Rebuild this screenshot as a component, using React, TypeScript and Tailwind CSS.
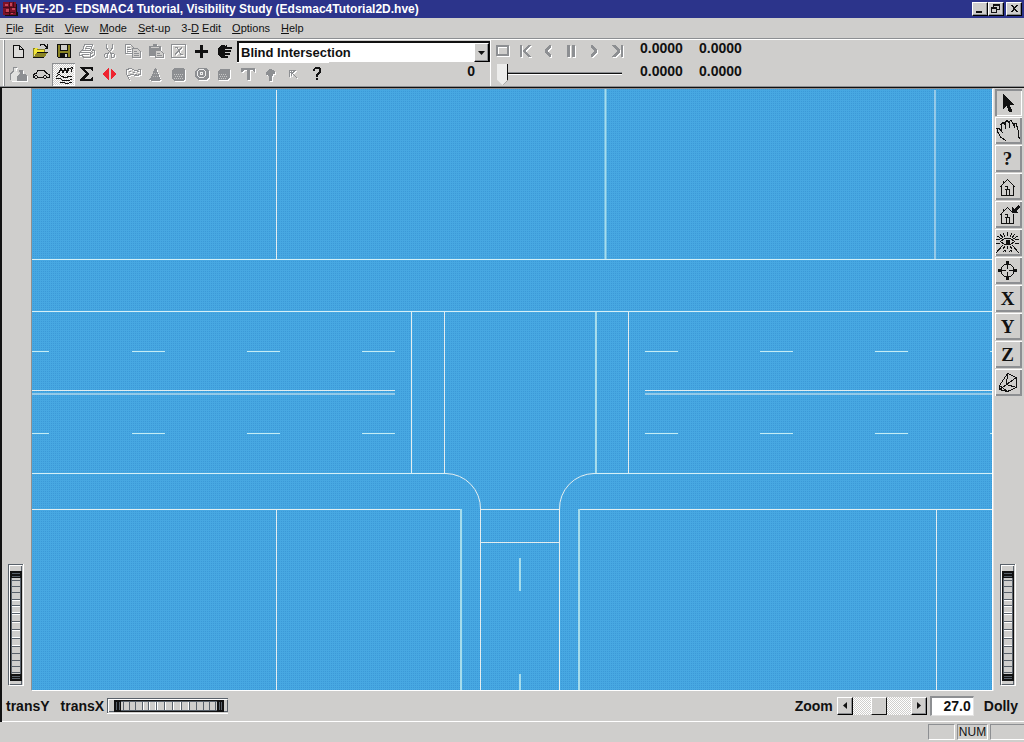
import { useState } from "react";
import type { ReactNode } from "react";
import clsx from "clsx";

const RAISED = "border border-t-white border-l-white border-r-black border-b-black bg-[#cfcecc] shadow-[inset_-1px_-1px_0_#8d8f92]";
const DITHER = "bg-[conic-gradient(#fff_25%,#cfcecc_0_50%,#fff_0_75%,#cfcecc_0)] bg-[length:2px_2px]";

const MENUS = [
  { before: "", key: "F", after: "ile" },
  { before: "", key: "E", after: "dit" },
  { before: "", key: "V", after: "iew" },
  { before: "", key: "M", after: "ode" },
  { before: "", key: "S", after: "et-up" },
  { before: "3-", key: "D", after: " Edit" },
  { before: "", key: "O", after: "ptions" },
  { before: "", key: "H", after: "elp" },
];

interface Tool {
  name: string;
  icon: ReactNode;
  disabled?: boolean;
  pressed?: boolean;
}

const FILE_TOOLS: Tool[] = [
  { name: "New", icon: <path d="M7.5 5.5h6l4 4v8h-10zM13.5 5.5v4h4" fill="#dcdbd9" /> },
  {
    name: "Open",
    icon: (
      <>
        <path d="M4 8h4l1 1h6v3h-7l-4 5z" fill="#f3e63a" stroke="none" />
        <path d="M4.5 17V8.500h1M8 9.500h7v2" stroke="#8a8424" />
        <path d="M8 12h11l-4 6H4z" fill="#8a8424" stroke="none" />
        <path d="M4 17.500h11M11 5.500l1-1h3l3 3M18.500 4v4.500h-3M8 12.500h11" />
      </>
    ),
  },
  {
    name: "Save",
    icon: (
      <>
        <path d="M5.500 4.500h13v13h-12l-1-1z" fill="#8a8424" />
        <path d="M8.500 4.500h7v6h-7z" fill="#cfcecc" />
        <path d="M8 13h8v5H8z" fill="#111" stroke="none" />
        <path d="M13 14h2v3h-2z" fill="#cfcecc" stroke="none" />
      </>
    ),
  },
  {
    name: "Print",
    disabled: true,
    icon: (
      <>
        <path d="M9.500 4.500h8l-2 6h-8zM11 6.500h5M10 8.500h5" />
        <path d="M7.500 9.500l-3 3v3h3l1 2h7l4-3v-4l-2-1M4.500 12.500h11l3-3M15.500 12.500v5M7 14.500h7M18 12l-2 2" />
      </>
    ),
  },
  {
    name: "Cut",
    disabled: true,
    icon: (
      <>
        <path d="M8.500 4v4l5 6M14.500 4v4l-5 6" />
        <path d="M7.500 13.500h2v4h-2l-1-1v-2zM13.500 13.500h2l1 1v2l-1 1h-2z" />
      </>
    ),
  },
  {
    name: "Copy",
    disabled: true,
    icon: (
      <>
        <path d="M4.500 4.500h5l3 3v6h-8zM6 7.500h3M6 9.500h4M6 11.500h4" />
        <path d="M11.500 8.500h5l3 3v6h-8z" fill="#cfcecc" />
        <path d="M13 11.500h3M13 13.500h5M13 15.500h5" />
      </>
    ),
  },
  {
    name: "Paste",
    disabled: true,
    icon: (
      <>
        <path d="M5 6h4V4h4v2h4v10H5z" fill="currentColor" stroke="none" />
        <path d="M7 7.500h8" stroke="#cfcecc" />
        <path d="M11.500 10.500h5l3 3v4h-8z" fill="#cfcecc" />
        <path d="M13 13.500h3M13 15.500h5" />
      </>
    ),
  },
  {
    name: "Delete",
    disabled: true,
    icon: <path d="M4.500 4.500h14v13h-14zM8 7.500h2l4 7h2M15 7.500l-7 7" />,
  },
  { name: "Add", icon: <path d="M10 5h3v5h5v3h-5v5h-3v-5H5v-3h5z" fill="#111" stroke="none" /> },
  {
    name: "Edit object",
    icon: (
      <path
        d="M8 5h4v1l1-1h1v2h5v2h-7v1h6v2h-6v1h5v2h-5v1h3v1l-1 1H9l-3-2-1-3V9z"
        fill="#111"
        stroke="none"
      />
    ),
  },
];

const MODE_TOOLS: Tool[] = [
  {
    name: "Humans",
    disabled: true,
    icon: (
      <>
        <path d="M7 4h3v4l3 3v7H5v-7l2-2z" fill="#e2e2e0" stroke="none" />
        <path d="M7.500 8V4.500h3M4.500 17v-6l3-3" />
        <path d="M13 7h4v4h2l2 2v5H11v-5l2-2h1z" fill="currentColor" stroke="none" />
      </>
    ),
  },
  {
    name: "Vehicles",
    icon: (
      <path d="M5 14.500h-1v-3l3-1 2-3h6l3 3 2 1v3h-2M9 14.500h5M5.500 13.500l1-1h1l1 1v1l-1 1h-1l-1-1zM14.500 13.500l1-1h1l1 1v1l-1 1h-1l-1-1z" />
    ),
  },
  {
    name: "Environment",
    pressed: true,
    icon: (
      <path d="M5 10.500l2-1 2-4 2 4 2-4 2 4 2-3M15 8.500l1-3h2l2-1M20.500 4l-1 5M4 13.500l3-2 3 2 3 1 5-1 2 0M4 15.500l4 0 3 2 5 0 4-1M8 19.500l4 0 2 1 6-1" />
    ),
  },
  {
    name: "Event",
    icon: <path d="M5 4h13v4h-1l-1-2H9l5 5-5 5h7l1-2h1v4H5v-2l6-5-6-6z" fill="#111" stroke="none" />,
  },
  {
    name: "Playback",
    icon: <path d="M10.500 5v12l-6-6zM12.500 5v12l6-6z" fill="#ee2430" stroke="none" />,
  },
  {
    name: "Flag",
    disabled: true,
    icon: <path d="M5.500 6v5l3 6M5.500 6.500l4-1 5 2 5-1v5l-4 1-5-1-3 1M8 8.500h2M12 9.500h2M16 8.500h2M9 11.500h2M14 11.500h2" />,
  },
  {
    name: "Cone",
    disabled: true,
    icon: (
      <>
        <path d="M11 5h1l4 10 1 2-2 1H8l-3-1 2-3z" fill="currentColor" stroke="none" />
        <path d="M10 10.500h4M9 13.500h6" stroke="#bbb" strokeDasharray="1 1" />
      </>
    ),
  },
  {
    name: "Barrel",
    disabled: true,
    icon: (
      <>
        <path d="M7 5h9l2 2v9l-2 2H7l-2-2V7z" fill="currentColor" stroke="none" />
        <path d="M7 11.500h9M8 13.500h8M7 15.500h9" stroke="#c6c6c5" strokeDasharray="1 1" />
      </>
    ),
  },
  {
    name: "Tire",
    disabled: true,
    icon: (
      <>
        <path d="M8 5h8l3 3v6l-3 3H8l-3-3V8z" fill="currentColor" stroke="none" />
        <path d="M9.500 6.500h4l2 2v4l-2 2h-4l-2-2v-4zM10.500 9.500h2v2h-2z" stroke="#eee" />
      </>
    ),
  },
  {
    name: "Box",
    disabled: true,
    icon: (
      <>
        <path d="M7 6h10v8l-3 3H5V8z" fill="currentColor" stroke="none" />
        <path d="M6 11.500h8M7 13.500h7M6 15.500h8" stroke="#c6c6c5" strokeDasharray="1 1" />
      </>
    ),
  },
  { name: "Text", disabled: true, icon: <path d="M5 5h14v4h-1l-1-2h-3v10h-3V7H8L6 9H5z" fill="currentColor" stroke="none" /> },
  {
    name: "Lamp",
    disabled: true,
    icon: <path d="M10 6h3v1h2l1 2v2h-2v2h-1v5h-3v-5H9v-1H7V9l2-2h1z" fill="currentColor" stroke="none" />,
  },
  {
    name: "Select",
    disabled: true,
    icon: <path d="M7.500 14V7.500h6M8 9.500h4M9.500 8v4M9 9l6 6M11.500 8l1 1M9 12l1 1" />,
  },
  {
    name: "Help",
    icon: <path d="M8 8V6l2-2h4l2 2v3l-3 3v2h-2v-3l3-3V6h-4v2zM11 15h2v2h-2z" fill="#111" stroke="none" />,
  },
];

const VIEW_TOOLS: Tool[] = [
  {
    name: "Pick",
    pressed: true,
    icon: <path d="M8 3v16l3-3 1 1 2 5h3v-2l-2-4v-1h4z" fill="#111" stroke="none" />,
  },
  {
    name: "Pan",
    icon: (
      <path d="M11 22.500l-5-3-3-5-1-4 2 0 3 3-1-7 2-2 2 2 1 4-1-6 2-2 2 2 1 5-1-6 2-1 2 3 2 4-1-4 2 0 2 6 1 8 2 3" />
    ),
  },
  { name: "View help", icon: "?" },
  {
    name: "Home",
    icon: <path d="M4.500 13.500l8-8 8 8M6.500 12v9.500h12V12M8.500 9V6.500M9.500 12.500h3v3h-3M14.500 21v-5.500h-3v6" />,
  },
  {
    name: "Set home",
    icon: (
      <>
        <path d="M4.500 13.500l8-8 6 6M6.500 12v9.500h12V12M8.500 9V6.500M9.500 12.500h3v3h-3M14.500 21v-5.500h-3v6" />
        <path d="M17 5l2 2 4-4 2 2-4 4 2 2h-6z" fill="#111" stroke="none" />
      </>
    ),
  },
  {
    name: "View all",
    icon: (
      <>
        <path d="M5.500 11.500l4-3h6l4 3-4 3h-6z" />
        <path d="M11 10h3v3h-3z" fill="#111" />
        <path d="M12.500 2v4M8.500 3l1 4M16.500 3l-1 4M5 4l3 4M20 4l-3 4M2 6l5 3M23 6l-5 3M1 9.500h4M20 9.500h4M1 13h4M20 13h4M8 15l-7 8M17 15l7 8M10 16l-2 3M15 16l2 3M12.500 16v3M8 22l2-2 1 2M14 22l2-2 1 2" />
      </>
    ),
  },
  {
    name: "Seek",
    icon: (
      <>
        <circle cx="12.500" cy="12.500" r="6.500" />
        <path d="M11 3h3v4h-3zM11 18h3v4h-3zM3 11h4v3H3zM18 11h4v3h-4z" fill="#111" stroke="none" />
        <path d="M12.500 7v4M12.500 14v4M7 12.500h4M14 12.500h4" />
      </>
    ),
  },
  { name: "View along X", icon: "X" },
  { name: "View along Y", icon: "Y" },
  { name: "View along Z", icon: "Z" },
  {
    name: "Perspective",
    icon: <path d="M12.500 3.500l9 4v10l-9 4-8-2v-4zM12.500 3.500l-1 11-7 5M11.500 14.500l10-7M11.500 14.500l10 3M4.500 15.500l8 6" />,
  },
];

const PLAYBACK = [
  { name: "Reset", icon: <path d="M5 5h13v11H5zM7 7v7h9V7z" fillRule="evenodd" /> },
  { name: "Rewind", icon: <path d="M6 5h2v12H6zM14 5h3l-5 6 5 6h-3l-5-5v-2z" /> },
  { name: "Step back", icon: <path d="M12 5h2v2l-3 4 3 4v2h-2l-4-5v-2z" /> },
  { name: "Pause", icon: <path d="M7 5h3v12H7zM12 5h3v12h-3z" /> },
  { name: "Play", icon: <path d="M8 5h2l4 5v2l-4 5H8v-2l3-4-3-4z" /> },
  { name: "Fast forward", icon: <path d="M6 5h3l5 5v2l-5 5H6l5-6zM15 5h2v12h-2z" /> },
];

const DASH_X = [-16, 100, 215, 330, 613, 728, 843, 958];

function ToolButton({ tool }: { tool: Tool }) {
  return (
    <button
      type="button"
      aria-label={tool.name}
      disabled={tool.disabled}
      className={clsx(
        "h-[23px] w-[23px] shrink-0",
        tool.disabled ? "text-[#8d8f92]" : "text-[#111]",
        tool.pressed && [DITHER, "shadow-[inset_1px_1px_0_#8d8f92,inset_-1px_-1px_0_#fff]"],
      )}
    >
      <svg
        viewBox="0 0 23 23"
        className={clsx("h-[23px] w-[23px]", tool.disabled && "drop-shadow-[1px_1px_0_#fff]")}
        fill="none"
        stroke="currentColor"
        shapeRendering="crispEdges"
        aria-hidden="true"
      >
        {tool.icon}
      </svg>
    </button>
  );
}

function ViewButton({ tool }: { tool: Tool }) {
  return (
    <button
      type="button"
      aria-label={tool.name}
      className={clsx(
        "flex h-[27px] w-[27px] items-center justify-center overflow-hidden pr-[2px]",
        tool.pressed
          ? "shadow-[inset_2px_2px_0_#8d8f92,inset_-1px_-1px_0_#fff]"
          : "shadow-[inset_1px_1px_0_#fff,inset_-2px_-2px_0_#8d8f92]",
      )}
    >
      {typeof tool.icon === "string" ? (
        <span className="font-['Liberation_Serif',serif] text-[19px] leading-5 font-bold">{tool.icon}</span>
      ) : (
        <svg
          viewBox="0 0 25 25"
          className="h-[25px] w-[25px] shrink-0"
          fill="none"
          stroke="#111"
          shapeRendering="crispEdges"
          aria-hidden="true"
        >
          {tool.icon}
        </svg>
      )}
    </button>
  );
}

const TICKS = [16, 22, 28, 35, 41, 49, 57, 65, 74, 82, 89, 96, 102, 108];

function Thumbwheel({ label, horizontal = false }: { label: string; horizontal?: boolean }) {
  return (
    <div className={clsx("relative shrink-0", horizontal ? "h-4 w-[121px]" : "h-[122px] w-4")}>
      <svg
        viewBox={horizontal ? "0 0 121 16" : "0 0 16 122"}
        className="h-full w-full"
        shapeRendering="crispEdges"
        fill="none"
        aria-hidden="true"
      >
        <g transform={horizontal ? "matrix(0 1 1 0 0 0)" : undefined}>
          <path d="M.5 121V.5H15" stroke="#59616a" />
          <path d="M1.500 120V1.500h12M1 121.500h14.500V0" stroke="#fff" />
          <path d="M13.500 2v118.500H2" stroke="#59616a" />
          <path d="M2 7h12v110H2z" fill="#111" />
          <path d="M3 14h10v96H3z" fill="#59616a" />
          <path d="M4 14h8v96H4z" fill="#cfcecc" />
          {TICKS.map((y) => (
            <path key={y} d={`M4 ${y + 0.5}h8`} stroke="#59616a" />
          ))}
          <path d="M4 36.500h8M4 42.500h8M4 48.500h8M4 50.500h8M4 58.500h8M4 66.500h8M4 73.500h8M4 81.500h8" stroke="#fff" />
          <path d="M4 9.500h8M4 12.500h8M4 112.500h8M4 114.500h8" stroke="#59616a" />
        </g>
      </svg>
      <input type="range" aria-label={label} className="absolute inset-0 h-full w-full opacity-0" />
    </div>
  );
}

function RoadView() {
  return (
    <svg
      viewBox="0 0 960 601"
      preserveAspectRatio="xMidYMid slice"
      className="h-full w-full"
      fill="none"
      stroke="#e4eef0"
      role="img"
      aria-label="Plan view of the intersection"
    >
      {/* lot lines */}
      <path d="M244.500 1v169M903 1v169M244.500 420v181M904.500 420v181" />
      <path d="M573.500 0v170" stroke="#a5dcec" strokeWidth="2" />
      {/* kerbs and sidewalks */}
      <path d="M0 170.500h960M0 222.500h960M0 384.500h414M562 384.500h398" stroke="#d5eff6" />
      <path d="M0 420.500h429M448 420.500h80M547 420.500h413" />
      <path d="M414 384.500a35 35 0 0 1 34.500 36V601M562 384.500a35 35 0 0 0-34.500 36V601" />
      <path d="M429 420v181M547 420v181" stroke="#a5dcec" strokeWidth="2" />
      {/* crosswalks and stop line */}
      <path d="M379.500 223v161M412.500 223v161M596.500 223v161M448 453.500h80" />
      <path d="M564 223v161" stroke="#a5dcec" strokeWidth="2" />
      {/* centre line */}
      <path d="M0 301.500h363M0 305h363M613 301.500h347M613 305h347" stroke="#e4eef0" />
      {DASH_X.map((x) => (
        <path key={x} d={`M${x} 262.500h33M${x} 344.500h33`} stroke="#c4ecf4" />
      ))}
      <path d="M488 469v33M488 585v16" stroke="#a5dcec" strokeWidth="2" />
    </svg>
  );
}

export default function App() {
  const [frame, setFrame] = useState(0);
  const [zoom, setZoom] = useState(43);

  return (
    <div className="flex min-h-screen flex-col bg-[#cfcecc] font-['Liberation_Sans',Arial,sans-serif] text-[#111]">
      <header className="flex h-[18px] items-center bg-[#2c348b] pr-[2px] pl-[2px] text-white">
        <svg viewBox="0 0 16 16" className="mr-[2px] h-4 w-4" shapeRendering="crispEdges" aria-hidden="true">
          <path d="M1 1h13v13H1z" fill="#7d1227" />
          <path d="M14 3h1v8h1v4H3v-1h11z" fill="#111" />
          <path d="M3 3h3v2H3zM8 2h2v3H8zM4 8h3v3H4zM10 7h3v2h-3zM9 11h2v2H9z" fill="#c54658" />
          <path d="M1 6h13M7 1v13M11 1v5M3 11h10" stroke="#470a18" />
        </svg>
        <h1 className="flex-1 truncate text-xs leading-4 font-bold">
          HVE-2D - EDSMAC4 Tutorial, Visibility Study (Edsmac4Tutorial2D.hve)
        </h1>
        <button type="button" aria-label="Minimize" className={clsx("h-[14px] w-4", RAISED)}>
          <svg viewBox="0 0 14 12" shapeRendering="crispEdges" aria-hidden="true">
            <path d="M3 8h6v2H3z" fill="#111" />
          </svg>
        </button>
        <button type="button" aria-label="Restore" className={clsx("mr-[2px] h-[14px] w-4", RAISED)}>
          <svg viewBox="0 0 14 12" fill="none" stroke="#111" shapeRendering="crispEdges" aria-hidden="true">
            <path d="M5 2h6M5 1h6M4.500 4V1M10.500 1v5.500H8M2 5h6M2 4h6M2.500 4v5.500h5V4" />
          </svg>
        </button>
        <button type="button" aria-label="Close" className={clsx("h-[14px] w-4", RAISED)}>
          <svg viewBox="0 0 14 12" fill="#111" shapeRendering="crispEdges" aria-hidden="true">
            <path d="M3 2h2l2 2 2-2h2L8 5v1l3 3H9L7 7 5 9H3l3-3V5z" />
          </svg>
        </button>
      </header>

      <nav className="flex h-[21px] items-center gap-[11px] border-b border-[#8d8f92] pl-[6px] text-[11px] leading-4">
        {MENUS.map((m) => (
          <button key={m.key} type="button" className="whitespace-pre">
            {m.before}
            <span className="underline">{m.key}</span>
            {m.after}
          </button>
        ))}
      </nav>

      <section className="flex h-12 border-t border-b border-t-white border-b-[#8d8f92] pl-[3px]">
        <div className="mr-px w-[2px] shrink-0 border-r border-l border-l-white border-r-[#8d8f92]" />
        <div className="w-[484px] shrink-0">
          <div className="flex h-[23px]">
            {FILE_TOOLS.map((t) => (
              <ToolButton key={t.name} tool={t} />
            ))}
            <div className="ml-px min-w-0 flex-1">
              <div className="mt-px flex h-[21px] border-t-2 border-r border-l-2 border-[#111] bg-white">
                <select aria-label="Event" className="flex-1 appearance-none pl-[2px] text-[13px] leading-4 font-bold outline-none">
                  <option>Blind Intersection</option>
                </select>
                <span className={clsx("flex w-[15px] items-center justify-center", RAISED)}>
                  <svg viewBox="0 0 7 4" className="h-1 w-[7px]" aria-hidden="true">
                    <path d="M0 0h7L3.500 4z" fill="#111" />
                  </svg>
                </span>
              </div>
              <div className="h-px w-[92px] bg-white" />
            </div>
          </div>
          <div className="flex h-[23px] items-start justify-between">
            <div className="flex">
              {MODE_TOOLS.map((t) => (
                <ToolButton key={t.name} tool={t} />
              ))}
            </div>
            <output className="pr-[15px] text-sm leading-4 font-bold">{frame}</output>
          </div>
        </div>
        <div className="w-[142px] shrink-0 border-l border-white">
          <div className="flex h-[23px]">
            {PLAYBACK.map((p) => (
              <button key={p.name} type="button" disabled aria-label={p.name} className="h-[23px] w-[23px] text-[#8d8f92]">
                <svg
                  viewBox="0 0 23 23"
                  className="h-[23px] w-[23px] drop-shadow-[1px_1px_0_#fff]"
                  fill="currentColor"
                  shapeRendering="crispEdges"
                  aria-hidden="true"
                >
                  {p.icon}
                </svg>
              </button>
            ))}
          </div>
          <input
            type="range"
            aria-label="Frame"
            min={0}
            max={100}
            value={frame}
            onChange={(e) => setFrame(Number(e.target.value))}
            className="ml-[6px] block h-[23px] w-[125px] appearance-none bg-[linear-gradient(#8d8f92_0_1px,#111_1px_2px,#fff_2px)] bg-[length:100%_3px] bg-[position:0_9px] bg-no-repeat [&::-webkit-slider-thumb]:h-[21px] [&::-webkit-slider-thumb]:w-[11px] [&::-webkit-slider-thumb]:appearance-none [&::-webkit-slider-thumb]:border-r [&::-webkit-slider-thumb]:border-[#111] [&::-webkit-slider-thumb]:bg-[linear-gradient(135deg,#ededec_84%,#111_84%)] [&::-webkit-slider-thumb]:[clip-path:polygon(0_0,100%_0,100%_75%,50%_100%,0_75%)]"
          />
        </div>
        <div className="grid grid-cols-[59px_59px] grid-rows-[23px_23px] pl-2 text-sm leading-4 font-bold">
          <output>0.0000</output>
          <output>0.0000</output>
          <output>0.0000</output>
          <output>0.0000</output>
        </div>
      </section>

      <main className="flex flex-1 flex-col border-t border-l-2 border-[#111]">
        <div className="flex flex-1">
          <aside className="flex w-[29px] shrink-0 items-end pb-[5px] pl-[6px]">
            <Thumbwheel label="Rotate X" />
          </aside>
          <div className="relative min-w-0 flex-1 border border-t-[#8d8f92] border-r-white border-b-white border-l-[#8d8f92] bg-[conic-gradient(#3c99d8_25%,#47a8e2_0)] bg-[length:2px_2px]">
            <div className="absolute inset-0">
              <RoadView />
            </div>
          </div>
          <aside className="flex w-[31px] shrink-0 flex-col border-l border-[#e4e3e2] pt-px pb-[5px]">
            <div className="flex flex-1 flex-col gap-px pl-px">
              {VIEW_TOOLS.map((t) => (
                <ViewButton key={t.name} tool={t} />
              ))}
            </div>
            <div className="pl-[6px]">
              <Thumbwheel label="Dolly" />
            </div>
          </aside>
        </div>
        <div className="flex h-[31px] items-center border-b border-white pr-[6px] pb-px pl-1 text-sm leading-4 font-bold">
          <span>transY</span>
          <span className="mr-[3px] ml-[11px]">transX</span>
          <Thumbwheel label="transX" horizontal />
          <label htmlFor="zoom" className="mr-1 ml-auto">
            Zoom
          </label>
          <button type="button" aria-label="Zoom out" className={clsx("flex h-[18px] w-4 items-center justify-center", RAISED)}>
            <svg viewBox="0 0 4 7" className="h-[7px] w-1" aria-hidden="true">
              <path d="M4 0v7L0 3.500z" fill="#111" />
            </svg>
          </button>
          <input
            id="zoom"
            type="range"
            value={zoom}
            onChange={(e) => setZoom(Number(e.target.value))}
            className={clsx(
              "h-[18px] w-[58px] appearance-none",
              DITHER,
              "[&::-webkit-slider-thumb]:h-[18px] [&::-webkit-slider-thumb]:w-4 [&::-webkit-slider-thumb]:appearance-none [&::-webkit-slider-thumb]:border [&::-webkit-slider-thumb]:border-t-white [&::-webkit-slider-thumb]:border-r-[#111] [&::-webkit-slider-thumb]:border-b-[#111] [&::-webkit-slider-thumb]:border-l-white [&::-webkit-slider-thumb]:bg-[#cfcecc]",
            )}
          />
          <button type="button" aria-label="Zoom in" className={clsx("flex h-[18px] w-4 items-center justify-center", RAISED)}>
            <svg viewBox="0 0 4 7" className="h-[7px] w-1" aria-hidden="true">
              <path d="M0 0v7l4-3.500z" fill="#111" />
            </svg>
          </button>
          <input
            aria-label="Zoom value"
            defaultValue="27.0"
            className="mr-[10px] ml-[3px] h-5 w-[44px] border border-t-2 border-l-2 border-t-[#8d8f92] border-r-[#e4e3e2] border-b-[#e4e3e2] border-l-[#8d8f92] bg-white pr-[2px] text-right text-sm leading-4 font-bold outline-none"
          />
          <span>Dolly</span>
        </div>
      </main>

      <footer className="flex h-5 items-start justify-end gap-[2px] pt-[2px] text-xs leading-[14px]">
        <span className="h-4 w-[27px] border border-t-[#8d8f92] border-r-white border-b-white border-l-[#8d8f92]" />
        <span className="h-4 w-[31px] border border-t-[#8d8f92] border-r-white border-b-white border-l-[#8d8f92] text-center">
          NUM
        </span>
        <span className="h-4 w-[34px] border border-r-0 border-t-[#8d8f92] border-b-white border-l-[#8d8f92]" />
      </footer>
    </div>
  );
}
